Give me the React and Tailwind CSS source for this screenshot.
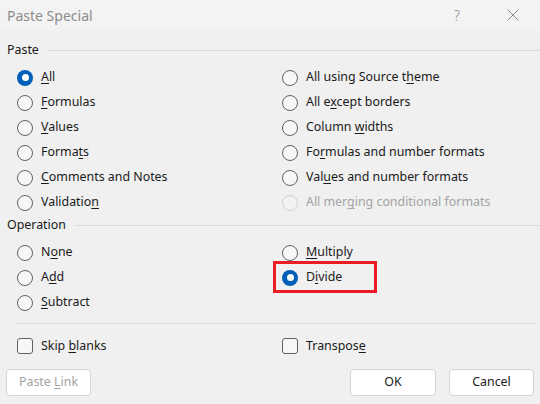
import React from 'react'

const FONT = { fontFamily: '"Noto Sans", "Open Sans", sans-serif' }

// label pieces: [before, accessKey, after]
const PASTE_LEFT = [
  { parts: ['', 'A', 'll'], checked: true },
  { parts: ['', 'F', 'ormulas'] },
  { parts: ['', 'V', 'alues'] },
  { parts: ['Forma', 't', 's'] },
  { parts: ['', 'C', 'omments and Notes'] },
  { parts: ['Validatio', 'n', ''] },
]

const PASTE_RIGHT = [
  { parts: ['All using Source t', 'h', 'eme'] },
  { parts: ['All e', 'x', 'cept borders'] },
  { parts: ['Column ', 'w', 'idths'] },
  { parts: ['Fo', 'r', 'mulas and number formats'] },
  { parts: ['Val', 'u', 'es and number formats'] },
  { parts: ['All mer', 'g', 'ing conditional formats'], disabled: true },
]

function Label({ parts, disabled }) {
  const [a, k, b] = parts
  return (
    <span className={`text-[12.4px] leading-none whitespace-nowrap ${disabled ? 'text-[#a3a3a3]' : 'text-[#1a1a1a]'}`}>
      {a}
      <span className="underline underline-offset-[2px]">{k}</span>
      {b}
    </span>
  )
}

function Radio({ checked, disabled }) {
  if (checked) {
    return (
      <span className="w-4 h-4 rounded-full bg-[#005fb8] flex items-center justify-center shrink-0">
        <span className="w-[7px] h-[7px] rounded-full bg-white" />
      </span>
    )
  }
  return (
    <span
      className={`w-4 h-4 rounded-full border shrink-0 ${
        disabled ? 'border-[#cfcfcf] bg-[#f3f3f3]' : 'border-[#616161] bg-[#f7f7f7]'
      }`}
    />
  )
}

function RadioRow({ item }) {
  return (
    <div className="h-[25px] flex items-center gap-2">
      <Radio checked={item.checked} disabled={item.disabled} />
      <Label parts={item.parts} disabled={item.disabled} />
    </div>
  )
}

function GroupLabel({ text }) {
  return (
    <div className="h-5 flex items-center">
      <span className="pl-[7px] text-[12.4px] text-[#1a1a1a] leading-none">{text}</span>
      <div className="h-px bg-[#d9d9d9] flex-1 ml-[9px]" />
    </div>
  )
}

function Checkbox({ parts }) {
  return (
    <div className="flex items-center gap-2">
      <span className="w-4 h-4 rounded-[3px] border border-[#616161] bg-[#f7f7f7] shrink-0" />
      <Label parts={parts} />
    </div>
  )
}

function Button({ children, disabled, className = '' }) {
  return (
    <button
      className={`h-[27px] rounded-[4px] border border-[#d4d4d4] bg-white text-[12.4px] flex items-center justify-center ${
        disabled ? 'text-[#a3a3a3]' : 'text-[#1a1a1a]'
      } ${className}`}
    >
      {children}
    </button>
  )
}

export default function App() {
  return (
    <div className="w-[540px] h-[404px] bg-[#f0f0f0] flex flex-col overflow-hidden" style={FONT}>
      {/* Title bar */}
      <div className="h-[30px] bg-[#f3f3f3] flex items-center shrink-0">
        <span className="pl-[7px] text-[14px] text-[#8c8c8c] flex-1">Paste Special</span>
        <span className="w-[46px] text-center text-[14px] text-[#8c8c8c] font-light mr-[10px]">?</span>
        <span className="w-[46px] flex items-center justify-center mr-[4px]">
          <svg width="12" height="12" viewBox="0 0 12 12" fill="none" stroke="#8c8c8c" strokeWidth="1">
            <path d="M0.5 0.5 L11.5 11.5 M11.5 0.5 L0.5 11.5" />
          </svg>
        </span>
      </div>

      {/* Paste group */}
      <div className="mt-[10px]">
        <GroupLabel text="Paste" />
      </div>
      <div className="mt-[5px] grid grid-cols-[265px_1fr] pl-[17px]">
        <div className="flex flex-col">
          {PASTE_LEFT.map((it, i) => (
            <RadioRow key={i} item={it} />
          ))}
        </div>
        <div className="flex flex-col">
          {PASTE_RIGHT.map((it, i) => (
            <RadioRow key={i} item={it} />
          ))}
        </div>
      </div>

      {/* Operation group */}
      <GroupLabel text="Operation" />
      <div className="mt-[5px] grid grid-cols-[265px_1fr] pl-[17px]">
        <div className="flex flex-col">
          <RadioRow item={{ parts: ['N', 'o', 'ne'] }} />
          <RadioRow item={{ parts: ['A', 'd', 'd'] }} />
          <RadioRow item={{ parts: ['', 'S', 'ubtract'] }} />
        </div>
        <div className="flex flex-col">
          <RadioRow item={{ parts: ['', 'M', 'ultiply'] }} />
          <div className="relative">
            <RadioRow item={{ parts: ['D', 'i', 'vide'], checked: true }} />
            {/* annotation box */}
            <div className="absolute left-[-9px] top-[-4px] w-[104px] h-[32px] border-[3px] border-[#ec1c24]" />
          </div>
        </div>
      </div>

      {/* separator */}
      <div className="mt-[8px] ml-4 mr-1 h-px bg-[#d9d9d9]" />

      <div className="mt-[10px] h-6 grid grid-cols-[265px_1fr] pl-[17px] items-center">
        <Checkbox parts={['Skip ', 'b', 'lanks']} />
        <Checkbox parts={['Transpos', 'e', '']} />
      </div>

      {/* buttons */}
      <div className="mt-[11px] flex items-center pl-[6px] pr-[6px]">
        <Button disabled className="w-[85px]">
          <span>
            Paste <span className="underline underline-offset-[2px]">L</span>ink
          </span>
        </Button>
        <div className="flex-1" />
        <Button className="w-[86px]">OK</Button>
        <Button className="w-[85px] ml-[13px]">Cancel</Button>
      </div>
    </div>
  )
}
